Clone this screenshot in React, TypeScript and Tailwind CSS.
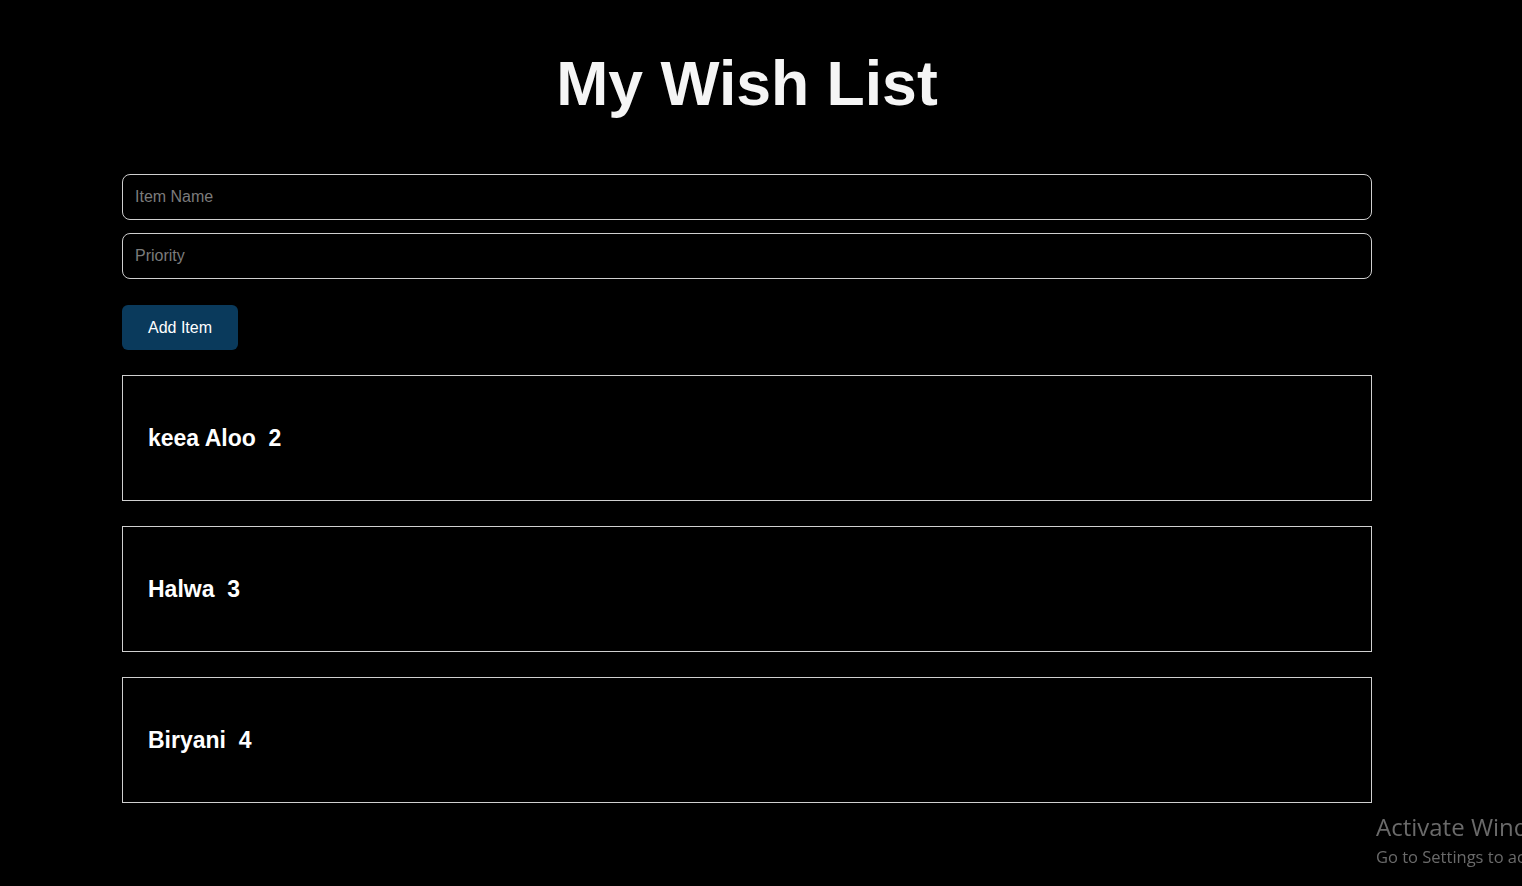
const items = [
  { name: 'keea Aloo', priority: 2 },
  { name: 'Halwa', priority: 3 },
  { name: 'Biryani', priority: 4 },
];

export default function App() {
  return (
    <div className="min-h-[886px] bg-black font-['Liberation_Sans',Arial,sans-serif] text-white">
      <div className="ml-[122px] w-[1250px] pt-[48px] pb-10">
        <h1 className="text-center text-[62.5px] font-bold leading-[71px] text-[#f5f5f5]">My Wish List</h1>

        {/* form */}
        <div className="mt-[55px] flex flex-col gap-[13px]">
          <input
            placeholder="Item Name"
            className="h-[46px] w-full rounded-lg border border-[#cfcfcf] bg-black px-3 text-base text-white outline-none placeholder:text-[#7b7b7b]"
          />
          <input
            placeholder="Priority"
            className="h-[46px] w-full rounded-lg border border-[#cfcfcf] bg-black px-3 text-base text-white outline-none placeholder:text-[#7b7b7b]"
          />
        </div>
        <button className="mt-[26px] h-[45px] w-[116px] rounded-md bg-[#0a3a5c] text-base text-white">
          Add Item
        </button>

        {/* list */}
        <div className="mt-[25px] flex flex-col gap-[25px]">
          {items.map((it) => (
            <div key={it.name} className="flex h-[126px] items-center border border-[#d0d0d0] px-[25px]">
              <span className="whitespace-pre text-[23px] font-bold">
                {it.name}  {it.priority}
              </span>
            </div>
          ))}
        </div>
      </div>

      {/* windows watermark */}
      <div className="pointer-events-none fixed inset-0 overflow-hidden">
        <div className="absolute left-[1376px] top-[811px] whitespace-nowrap font-['Open_Sans',sans-serif] text-[#6a6a6a]">
          <div className="text-[24px] leading-[32px]">Activate Windows</div>
          <div className="text-[16.5px] leading-[28px]">Go to Settings to activate Windows.</div>
        </div>
      </div>
    </div>
  );
}
